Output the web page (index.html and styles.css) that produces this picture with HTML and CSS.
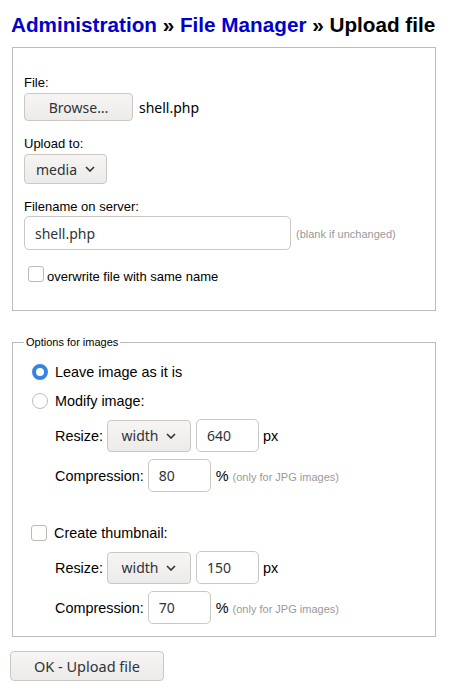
FILE: index.html
```html
<!DOCTYPE html>
<html>
<head>
<meta charset="utf-8">
<link rel="stylesheet" href="styles.css">
</head>
<body>
<div class="page">
  <h1 class="title"><a class="crumb">Administration</a> » <a class="crumb">File Manager</a> » Upload file</h1>

  <div class="box main">
    <div class="label">File:</div>
    <div class="row">
      <span class="btn browse">Browse…</span>
      <span class="fname">shell.php</span>
    </div>

    <div class="label gap">Upload to:</div>
    <div class="row">
      <span class="btn select media">media<svg class="chev" width="10" height="6" viewBox="0 0 10 6"><path d="M1 1l4 4 4-4" fill="none" stroke="#2e3436" stroke-width="1.6"/></svg></span>
    </div>

    <div class="label gap">Filename on server:</div>
    <div class="row">
      <span class="input wide">shell.php</span>
      <span class="note">(blank if unchanged)</span>
    </div>

    <div class="row check-row">
      <span class="checkbox"></span><span class="txt">overwrite file with same name</span>
    </div>
  </div>

  <fieldset class="box opts">
    <legend class="legend">Options for images</legend>

    <div class="opt r1"><span class="radio on"></span><span class="txt">Leave image as it is</span></div>
    <div class="opt r2"><span class="radio"></span><span class="txt">Modify image:</span></div>
    <div class="sub resize">
      <span class="txt">Resize:</span>
      <span class="btn select wsel">width<svg class="chev" width="10" height="6" viewBox="0 0 10 6"><path d="M1 1l4 4 4-4" fill="none" stroke="#2e3436" stroke-width="1.6"/></svg></span>
      <span class="input num">640</span>
      <span class="txt">px</span>
    </div>
    <div class="sub comp">
      <span class="txt">Compression:</span>
      <span class="input num">80</span>
      <span class="txt pct">%</span><span class="note">(only for JPG images)</span>
    </div>

    <div class="opt thumb"><span class="checkbox cb2"></span><span class="txt">Create thumbnail:</span></div>
    <div class="sub resize">
      <span class="txt">Resize:</span>
      <span class="btn select wsel">width<svg class="chev" width="10" height="6" viewBox="0 0 10 6"><path d="M1 1l4 4 4-4" fill="none" stroke="#2e3436" stroke-width="1.6"/></svg></span>
      <span class="input num">150</span>
      <span class="txt">px</span>
    </div>
    <div class="sub comp">
      <span class="txt">Compression:</span>
      <span class="input num">70</span>
      <span class="txt pct">%</span><span class="note">(only for JPG images)</span>
    </div>
  </fieldset>

  <div class="submit"><span class="btn ok">OK - Upload file</span></div>
</div>
</body>
</html>
```

FILE: styles.css
```css
html, body {
  margin: 0;
  padding: 0;
  background: #fff;
}
body {
  font-family: "Liberation Sans", Arial, sans-serif;
  font-size: 13px;
  color: #000;
}
.page {
  width: 428px;
  padding: 0 10px;
}
.title {
  margin: 13px 0 10px 1px;
  font-size: 20.7px;
  line-height: 24px;
  font-weight: bold;
  white-space: nowrap;
}
.crumb {
  color: #0000cc;
  text-decoration: none;
}
.box {
  margin: 0 2px;
  border: 1px solid #bcbcbc;
}
.main {
  padding: 27px 11px 28px;
}
.label {
  line-height: 16px;
  margin-bottom: 2px;
}
.label.gap {
  margin-top: 15px;
}
.row {
  display: flex;
  align-items: center;
}
.btn {
  box-sizing: border-box;
  display: inline-flex;
  align-items: center;
  justify-content: center;
  font-family: "Noto Sans", "Open Sans", sans-serif;
  font-size: 14px;
  color: #2e3436;
  background: linear-gradient(#f6f5f4, #edebe9);
  border: 1px solid #cdc7c2;
  border-radius: 4px;
}
.browse {
  width: 109px;
  height: 28px;
}
.fname {
  font-family: "Noto Sans", "Open Sans", sans-serif;
  font-size: 14px;
  margin-left: 6px;
}
.select {
  gap: 8px;
}
.media {
  width: 83px;
  height: 30px;
}
.input {
  box-sizing: border-box;
  display: inline-flex;
  align-items: center;
  font-family: "Noto Sans", "Open Sans", sans-serif;
  font-size: 14px;
  color: #2e3436;
  background: #fff;
  border: 1px solid #cdc7c2;
  border-radius: 5px;
  padding-left: 10px;
}
.wide {
  width: 267px;
  height: 34px;
  margin-top: -1px;
}
.note {
  font-size: 11px;
  color: #999;
  margin-left: 5px;
}
.check-row {
  margin-top: 16px;
}
.checkbox {
  box-sizing: border-box;
  width: 16px;
  height: 16px;
  margin-left: 4px;
  border: 1px solid #bdb8b2;
  border-radius: 3px;
  background: #fff;
}
.check-row .txt {
  margin-left: 3px;
  position: relative;
  top: 2px;
}
.opts {
  padding: 0 0 12px 11px;
  margin-top: 25px;
  min-width: 0;
}
.legend {
  font-size: 11px;
  line-height: 13px;
  padding: 0 2px;
}
.opt {
  display: flex;
  align-items: center;
  height: 16px;
}
.r1 { margin-top: 15px; }
.r2 { margin-top: 13px; }
.thumb { margin-top: 33px; }
.radio {
  box-sizing: border-box;
  width: 16px;
  height: 16px;
  margin-left: 8px;
  border-radius: 50%;
  border: 1px solid #c0bbb6;
  background: #fff;
}
.radio.on {
  border: 4.5px solid #3584e4;
}
.cb2 {
  margin-left: 7px;
}
.opt .txt {
  margin-left: 7px;
  font-size: 14.4px;
}
.sub {
  display: flex;
  align-items: center;
  padding-left: 31px;
  gap: 4px;
  font-size: 14.4px;
}
.sub.resize {
  margin-top: 10px;
  height: 33px;
}
.sub.comp {
  margin-top: 7px;
  height: 33px;
}
.wsel {
  width: 84px;
  height: 32px;
  margin-right: 1px;
}
.num {
  width: 63px;
  height: 33px;
}
.sub .pct {
  margin-left: 1px;
}
.sub .note {
  margin-left: 0;
  position: relative;
  top: 1px;
}
.submit {
  margin-top: 14px;
}
.ok {
  width: 154px;
  height: 30px;
  font-size: 14.5px;
}
```
